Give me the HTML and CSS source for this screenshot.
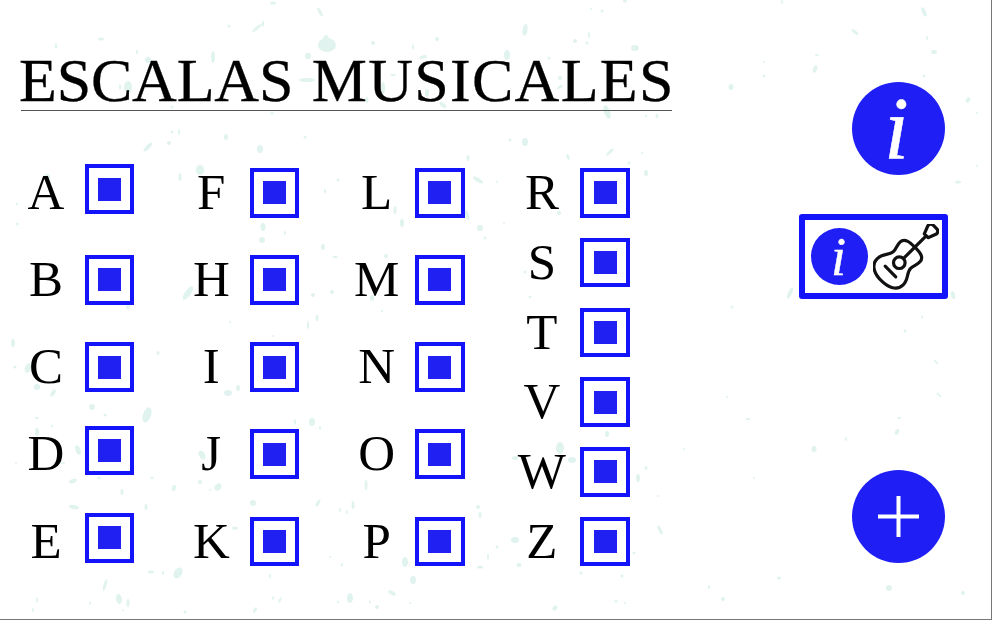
FILE: index.html
```html
<!DOCTYPE html>
<html lang="es">
<head>
<meta charset="utf-8">
<title>Escalas musicales</title>
<link rel="stylesheet" href="styles.css">
</head>
<body>
<div class="screen">
  <svg class="speckles" viewBox="0 0 992 620" aria-hidden="true">
    <g class="speck">
      <ellipse cx="56" cy="46" rx="1.2" ry="3"/><ellipse cx="101" cy="39" rx="3" ry="1.5"/><ellipse cx="137" cy="52" rx="1.2" ry="2"/><ellipse cx="213" cy="57" rx="2" ry="6"/><ellipse cx="148" cy="60" rx="3" ry="3"/><ellipse cx="128" cy="87" rx="4" ry="6"/><ellipse cx="120" cy="87" rx="1" ry="3"/><ellipse cx="257" cy="28" rx="6" ry="1.5" transform="rotate(-40 257 28)"/><ellipse cx="263" cy="24" rx="1.2" ry="3"/><ellipse cx="273" cy="3" rx="3" ry="1.5"/><ellipse cx="320" cy="12" rx="1.5" ry="5" transform="rotate(-30 320 12)"/><ellipse cx="327" cy="45" rx="9" ry="7"/><ellipse cx="326" cy="40" rx="3" ry="5"/><ellipse cx="308" cy="56" rx="3" ry="3"/><ellipse cx="307" cy="80" rx="8" ry="2"/><ellipse cx="229" cy="26" rx="1.5" ry="1.5"/><ellipse cx="373" cy="43" rx="2" ry="2"/><ellipse cx="437" cy="39" rx="2" ry="2"/><ellipse cx="413" cy="47" rx="1" ry="3"/><ellipse cx="423" cy="57" rx="4" ry="1.5" transform="rotate(-20 423 57)"/><ellipse cx="393" cy="75" rx="3" ry="1"/><ellipse cx="383" cy="88" rx="2" ry="6"/><ellipse cx="367" cy="100" rx="1.5" ry="3"/><ellipse cx="427" cy="93" rx="2" ry="4"/><ellipse cx="443" cy="105" rx="4" ry="2" transform="rotate(40 443 105)"/><ellipse cx="172" cy="107" rx="1.5" ry="1.5"/><ellipse cx="272" cy="113" rx="1.5" ry="1.5"/>
      <ellipse cx="148" cy="147" rx="6" ry="2" transform="rotate(-45 148 147)"/><ellipse cx="169" cy="143" rx="2" ry="2"/><ellipse cx="172" cy="132" rx="1.5" ry="1.5"/><ellipse cx="179" cy="132" rx="1" ry="3"/><ellipse cx="226" cy="137" rx="2" ry="3"/><ellipse cx="260" cy="149" rx="3" ry="4"/><ellipse cx="305" cy="137" rx="1.5" ry="1.5"/><ellipse cx="200" cy="170" rx="4" ry="5"/><ellipse cx="180" cy="177" rx="1.5" ry="4"/><ellipse cx="47" cy="177" rx="3" ry="3"/><ellipse cx="478" cy="180" rx="6" ry="2" transform="rotate(30 478 180)"/><ellipse cx="468" cy="158" rx="1.5" ry="3"/><ellipse cx="338" cy="180" rx="1.5" ry="1.5"/><ellipse cx="325" cy="191" rx="1" ry="2.5"/><ellipse cx="395" cy="210" rx="1.5" ry="4"/><ellipse cx="402" cy="223" rx="2" ry="4"/><ellipse cx="263" cy="227" rx="2.5" ry="4"/><ellipse cx="285" cy="233" rx="1" ry="2"/><ellipse cx="262" cy="240" rx="3" ry="3"/><ellipse cx="323" cy="247" rx="2" ry="3"/><ellipse cx="480" cy="228" rx="3" ry="3"/><ellipse cx="485" cy="238" rx="1.5" ry="1.5"/><ellipse cx="467" cy="215" rx="2" ry="5" transform="rotate(-20 467 215)"/><ellipse cx="17" cy="204" rx="1.2" ry="1.2"/><ellipse cx="17" cy="224" rx="1.5" ry="1.5"/><ellipse cx="188" cy="293" rx="3" ry="8" transform="rotate(35 188 293)"/><ellipse cx="335" cy="257" rx="3" ry="1"/><ellipse cx="386" cy="256" rx="2" ry="2"/><ellipse cx="332" cy="292" rx="2" ry="2"/><ellipse cx="313" cy="295" rx="2" ry="2"/><ellipse cx="372" cy="298" rx="2" ry="3"/><ellipse cx="128" cy="307" rx="2" ry="2"/>
      <ellipse cx="525" cy="30" rx="2.5" ry="6" transform="rotate(10 525 30)"/><ellipse cx="507" cy="55" rx="3" ry="5"/><ellipse cx="589" cy="35" rx="1" ry="3"/><ellipse cx="587" cy="43" rx="1.5" ry="1.5"/><ellipse cx="575" cy="41" rx="2" ry="2"/><ellipse cx="635" cy="48" rx="4" ry="3"/><ellipse cx="549" cy="58" rx="1.5" ry="1.5"/><ellipse cx="625" cy="1" rx="2" ry="1.5"/><ellipse cx="591" cy="9" rx="1" ry="1"/><ellipse cx="602" cy="11" rx="1.5" ry="1.5"/><ellipse cx="560" cy="78" rx="2" ry="2"/><ellipse cx="560" cy="87" rx="3" ry="1.5" transform="rotate(-30 560 87)"/><ellipse cx="607" cy="112" rx="3" ry="7" transform="rotate(-20 607 112)"/><ellipse cx="657" cy="116" rx="1.5" ry="2"/><ellipse cx="646" cy="116" rx="1.2" ry="1.2"/><ellipse cx="525" cy="142" rx="3" ry="4"/><ellipse cx="510" cy="140" rx="1.5" ry="1.5"/><ellipse cx="568" cy="157" rx="1.5" ry="3" transform="rotate(-20 568 157)"/><ellipse cx="610" cy="152" rx="5" ry="1.5" transform="rotate(-45 610 152)"/><ellipse cx="646" cy="173" rx="2" ry="3"/><ellipse cx="642" cy="153" rx="1" ry="1"/><ellipse cx="629" cy="163" rx="1.5" ry="1.5"/><ellipse cx="497" cy="182" rx="1" ry="1"/><ellipse cx="559" cy="213" rx="2" ry="2"/><ellipse cx="504" cy="223" rx="1" ry="1"/><ellipse cx="530" cy="297" rx="1.5" ry="1.5"/><ellipse cx="525" cy="272" rx="1.5" ry="1.5"/>
      <ellipse cx="731" cy="87" rx="2.5" ry="3"/><ellipse cx="764" cy="76" rx="1.5" ry="1.5"/><ellipse cx="764" cy="62" rx="1" ry="1"/><ellipse cx="815" cy="69" rx="2" ry="4" transform="rotate(20 815 69)"/><ellipse cx="817" cy="55" rx="2" ry="1"/><ellipse cx="855" cy="32" rx="4" ry="1.5" transform="rotate(40 855 32)"/><ellipse cx="782" cy="2" rx="1" ry="2"/><ellipse cx="924" cy="12" rx="2" ry="5" transform="rotate(-25 924 12)"/><ellipse cx="934" cy="52" rx="3" ry="2"/><ellipse cx="927" cy="38" rx="1" ry="2"/><ellipse cx="968" cy="100" rx="2" ry="3" transform="rotate(30 968 100)"/><ellipse cx="958" cy="182" rx="3" ry="1.5"/><ellipse cx="977" cy="166" rx="1" ry="1"/><ellipse cx="977" cy="113" rx="1" ry="1"/><ellipse cx="924" cy="76" rx="1.5" ry="1.5"/><ellipse cx="790" cy="293" rx="2" ry="6" transform="rotate(25 790 293)"/><ellipse cx="953" cy="295" rx="2" ry="4" transform="rotate(-15 953 295)"/><ellipse cx="732" cy="307" rx="1.5" ry="1.5"/>
      <ellipse cx="13" cy="343" rx="2" ry="4"/><ellipse cx="15" cy="367" rx="1.5" ry="1.5"/><ellipse cx="28" cy="368" rx="3" ry="5" transform="rotate(20 28 368)"/><ellipse cx="37" cy="387" rx="3" ry="3"/><ellipse cx="53" cy="393" rx="2" ry="4" transform="rotate(30 53 393)"/><ellipse cx="158" cy="353" rx="1.5" ry="2"/><ellipse cx="92" cy="407" rx="3" ry="3"/><ellipse cx="105" cy="415" rx="1.5" ry="1.5"/><ellipse cx="147" cy="415" rx="4" ry="8" transform="rotate(20 147 415)"/><ellipse cx="37" cy="418" rx="2" ry="1"/><ellipse cx="37" cy="432" rx="2" ry="4"/><ellipse cx="52" cy="426" rx="1" ry="1.5"/><ellipse cx="78" cy="450" rx="2.5" ry="5" transform="rotate(-20 78 450)"/><ellipse cx="63" cy="463" rx="2" ry="1"/><ellipse cx="16" cy="463" rx="1" ry="1"/><ellipse cx="73" cy="481" rx="4" ry="2" transform="rotate(-20 73 481)"/><ellipse cx="122" cy="492" rx="1.5" ry="3"/><ellipse cx="99" cy="478" rx="1.5" ry="1.5"/><ellipse cx="152" cy="478" rx="2" ry="1"/><ellipse cx="174" cy="488" rx="2" ry="3" transform="rotate(15 174 488)"/><ellipse cx="200" cy="482" rx="2" ry="2"/><ellipse cx="218" cy="487" rx="3" ry="4" transform="rotate(40 218 487)"/><ellipse cx="210" cy="490" rx="1" ry="1"/><ellipse cx="202" cy="455" rx="3" ry="5" transform="rotate(-30 202 455)"/><ellipse cx="74" cy="507" rx="5" ry="2" transform="rotate(10 74 507)"/><ellipse cx="146" cy="507" rx="1.5" ry="3"/><ellipse cx="228" cy="393" rx="4" ry="3"/><ellipse cx="238" cy="388" rx="2" ry="3"/><ellipse cx="253" cy="503" rx="3" ry="3"/><ellipse cx="318" cy="503" rx="1.5" ry="4" transform="rotate(30 318 503)"/><ellipse cx="353" cy="505" rx="1.5" ry="4"/><ellipse cx="340" cy="510" rx="1" ry="2"/><ellipse cx="347" cy="512" rx="1" ry="2"/><ellipse cx="312" cy="422" rx="3" ry="4"/><ellipse cx="295" cy="422" rx="1" ry="3"/><ellipse cx="320" cy="428" rx="1" ry="2"/><ellipse cx="366" cy="485" rx="1.5" ry="5"/><ellipse cx="317" cy="318" rx="1.5" ry="3"/><ellipse cx="308" cy="325" rx="1" ry="4"/><ellipse cx="382" cy="311" rx="1.2" ry="1.2"/><ellipse cx="273" cy="336" rx="1" ry="1"/><ellipse cx="230" cy="322" rx="1" ry="1"/><ellipse cx="478" cy="507" rx="2" ry="2"/><ellipse cx="480" cy="515" rx="1.5" ry="3"/><ellipse cx="235" cy="528" rx="3" ry="1.5"/><ellipse cx="405" cy="562" rx="3" ry="5"/><ellipse cx="480" cy="567" rx="3" ry="1.5"/><ellipse cx="488" cy="557" rx="1" ry="3"/><ellipse cx="413" cy="580" rx="3" ry="4"/><ellipse cx="392" cy="593" rx="4" ry="2" transform="rotate(30 392 593)"/><ellipse cx="350" cy="598" rx="3" ry="5"/><ellipse cx="338" cy="602" rx="1.2" ry="1.2"/><ellipse cx="370" cy="602" rx="1.2" ry="1.2"/><ellipse cx="377" cy="607" rx="2" ry="2"/><ellipse cx="410" cy="603" rx="1" ry="1"/><ellipse cx="342" cy="565" rx="1" ry="2"/><ellipse cx="330" cy="557" rx="1" ry="1"/>
      <ellipse cx="178" cy="573" rx="4" ry="6" transform="rotate(30 178 573)"/><ellipse cx="151" cy="572" rx="3" ry="1.5"/><ellipse cx="163" cy="573" rx="1" ry="2"/><ellipse cx="175" cy="575" rx="1.2" ry="1.2"/><ellipse cx="105" cy="585" rx="1.5" ry="6" transform="rotate(15 105 585)"/><ellipse cx="119" cy="599" rx="3" ry="5" transform="rotate(-10 119 599)"/><ellipse cx="128" cy="603" rx="1.5" ry="4"/><ellipse cx="37" cy="600" rx="1" ry="3"/><ellipse cx="33" cy="610" rx="1" ry="2"/><ellipse cx="90" cy="603" rx="1" ry="1.5"/><ellipse cx="123" cy="610" rx="1" ry="1"/><ellipse cx="185" cy="612" rx="1.5" ry="1.5"/><ellipse cx="270" cy="576" rx="1" ry="2.5"/><ellipse cx="280" cy="600" rx="1" ry="3" transform="rotate(25 280 600)"/><ellipse cx="273" cy="598" rx="1" ry="2"/><ellipse cx="255" cy="610" rx="1.5" ry="3" transform="rotate(30 255 610)"/>
      <ellipse cx="560" cy="448" rx="4" ry="6"/><ellipse cx="572" cy="460" rx="4" ry="3"/><ellipse cx="515" cy="458" rx="3" ry="2"/><ellipse cx="607" cy="434" rx="2" ry="3"/><ellipse cx="646" cy="468" rx="1.5" ry="2"/><ellipse cx="638" cy="478" rx="2" ry="4"/><ellipse cx="658" cy="496" rx="1" ry="1"/><ellipse cx="660" cy="530" rx="1.5" ry="5" transform="rotate(-25 660 530)"/><ellipse cx="515" cy="540" rx="4" ry="3"/><ellipse cx="497" cy="547" rx="1.5" ry="1.5"/><ellipse cx="519" cy="565" rx="2.5" ry="2"/><ellipse cx="634" cy="553" rx="1.5" ry="1.5"/><ellipse cx="581" cy="573" rx="1.5" ry="1.5"/><ellipse cx="622" cy="576" rx="1.5" ry="1.5"/><ellipse cx="616" cy="601" rx="1.5" ry="1.5"/><ellipse cx="625" cy="603" rx="1" ry="1"/><ellipse cx="555" cy="608" rx="2" ry="3" transform="rotate(35 555 608)"/><ellipse cx="709" cy="587" rx="1" ry="2"/><ellipse cx="723" cy="599" rx="2" ry="2"/><ellipse cx="779" cy="578" rx="2" ry="1.5"/><ellipse cx="889" cy="588" rx="3" ry="3"/><ellipse cx="963" cy="593" rx="2" ry="2"/><ellipse cx="748" cy="419" rx="2.5" ry="1"/><ellipse cx="814" cy="449" rx="2.5" ry="3"/><ellipse cx="897" cy="432" rx="2" ry="3" transform="rotate(25 897 432)"/><ellipse cx="846" cy="439" rx="1" ry="2"/><ellipse cx="899" cy="418" rx="2" ry="1"/><ellipse cx="936" cy="362" rx="3" ry="1" transform="rotate(40 936 362)"/><ellipse cx="939" cy="395" rx="3" ry="1" transform="rotate(40 939 395)"/><ellipse cx="905" cy="331" rx="1.5" ry="1.5"/><ellipse cx="922" cy="317" rx="1" ry="1.5"/><ellipse cx="727" cy="397" rx="1" ry="1"/><ellipse cx="754" cy="478" rx="1" ry="1"/><ellipse cx="684" cy="449" rx="1" ry="1"/>
    </g>
  </svg>

  <main class="left">
    <h1 class="title"><span class="word-first">ESCALAS</span> <span class="word-second">MUSICALES</span></h1>
    <div class="columns">
      <div class="column">
        <div class="row"><span class="letter">A</span><span class="box box-up"><span class="dot"></span></span></div>
        <div class="row"><span class="letter">B</span><span class="box"><span class="dot"></span></span></div>
        <div class="row"><span class="letter">C</span><span class="box"><span class="dot"></span></span></div>
        <div class="row"><span class="letter">D</span><span class="box box-up"><span class="dot"></span></span></div>
        <div class="row"><span class="letter">E</span><span class="box box-up"><span class="dot"></span></span></div>
      </div>
      <div class="column">
        <div class="row"><span class="letter">F</span><span class="box"><span class="dot"></span></span></div>
        <div class="row"><span class="letter">H</span><span class="box"><span class="dot"></span></span></div>
        <div class="row"><span class="letter">I</span><span class="box"><span class="dot"></span></span></div>
        <div class="row"><span class="letter">J</span><span class="box"><span class="dot"></span></span></div>
        <div class="row"><span class="letter">K</span><span class="box"><span class="dot"></span></span></div>
      </div>
      <div class="column">
        <div class="row"><span class="letter">L</span><span class="box"><span class="dot"></span></span></div>
        <div class="row"><span class="letter">M</span><span class="box"><span class="dot"></span></span></div>
        <div class="row"><span class="letter">N</span><span class="box"><span class="dot"></span></span></div>
        <div class="row"><span class="letter">O</span><span class="box"><span class="dot"></span></span></div>
        <div class="row"><span class="letter">P</span><span class="box"><span class="dot"></span></span></div>
      </div>
      <div class="column column-tight">
        <div class="row"><span class="letter">R</span><span class="box"><span class="dot"></span></span></div>
        <div class="row"><span class="letter">S</span><span class="box"><span class="dot"></span></span></div>
        <div class="row"><span class="letter">T</span><span class="box"><span class="dot"></span></span></div>
        <div class="row"><span class="letter">V</span><span class="box"><span class="dot"></span></span></div>
        <div class="row"><span class="letter">W</span><span class="box"><span class="dot"></span></span></div>
        <div class="row"><span class="letter">Z</span><span class="box"><span class="dot"></span></span></div>
      </div>
    </div>
  </main>

  <aside class="right">
    <div class="round round-large"><span class="info info-large">i</span></div>
    <div class="card">
      <div class="round round-small"><span class="info info-small">i</span></div>
      <svg class="guitar" viewBox="0 0 66 66" aria-hidden="true">
        <g transform="translate(26.3 38.7) rotate(45)">
          <path d="M0,-22 C7,-22 14,-21.5 14,-15 C14,-10 12,-8 12,-4 C12,2 18.5,5 18.5,13 C18.5,21.5 10,25.5 0,25.5 C-10,25.5 -18.5,21.5 -18.5,13 C-18.5,5 -12,2 -12,-4 C-12,-8 -14,-10 -14,-15 C-14,-21.5 -7,-22 0,-22 Z"/>
          <circle cx="0" cy="0" r="5.8"/>
          <path d="M0,-6 L0,-38"/>
          <path d="M-7.5,12.5 L7.5,12.5"/>
          <path d="M-2.6,-38 L2.6,-38 L6,-46.5 Q6,-50.5 2.2,-50.5 L-2.2,-50.5 Q-6,-50.5 -6,-46.5 Z"/>
        </g>
      </svg>
    </div>
    <div class="round round-large round-add">
      <svg class="plus" viewBox="0 0 41 41" aria-hidden="true"><path d="M0,20.5 H41 M20.5,0 V41"/></svg>
    </div>
  </aside>
</div>
</body>
</html>
```
FILE: styles.css
```css
* { box-sizing: border-box; }
html, body { margin: 0; padding: 0; background: #fff; }
.screen {
  position: relative;
  width: 992px;
  height: 620px;
  display: flex;
  justify-content: space-between;
  overflow: hidden;
  border-right: 1px solid #777;
  border-bottom: 1px solid #777;
  background: #fff;
  font-family: "Liberation Serif", "Times New Roman", serif;
  color: #000;
}
.speckles { position: absolute; left: 0; top: 0; width: 992px; height: 620px; }
.speck { fill: #e0f3ee; }

.left { position: relative; display: flex; flex-direction: column; padding-top: 52px; padding-left: 13px; }
.title {
  margin: 0 0 57px 8px;
  width: 651px;
  padding-bottom: 2px;
  border-bottom: 1px solid #555;
  font-size: 62px;
  font-weight: 400;
  line-height: 56px;
  word-spacing: 3px;
  text-indent: -2px;
  white-space: nowrap;
  -webkit-text-stroke: 0.3px #000;
}
.word-first { letter-spacing: -0.2px; }
.word-second { letter-spacing: 1.3px; }
.columns { display: flex; gap: 44.3px; }
.column { width: 121px; display: flex; flex-direction: column; gap: 37.67px; }
.column-tight { gap: 20.25px; }
.row { display: flex; align-items: center; gap: 5.5px; height: 49.5px; }
.letter { width: 66px; text-align: center; font-size: 51px; line-height: 49.5px; }
.box {
  width: 49.5px;
  height: 49.5px;
  flex: none;
  display: flex;
  align-items: center;
  justify-content: center;
  border: 4.4px solid #1414fb;
}
.box-up { align-self: flex-start; margin-top: -3.6px; }
.dot { width: 23px; height: 23px; background: #2020f2; }

.right { position: relative; display: flex; flex-direction: column; align-items: flex-end; padding: 82px 43px 56px 0; }
.round { display: flex; align-items: center; justify-content: center; border-radius: 50%; background: #1f1ff5; color: #fff; }
.round-large { width: 93px; height: 93px; margin-right: 3px; }
.round-small { width: 57px; height: 57px; flex: none; }
.round-add { margin-top: auto; }
.info { font-style: italic; line-height: 1; }
.info-large { font-size: 88px; margin-right: 4px; -webkit-text-stroke: 0.6px #fff; }
.info-small { font-size: 54px; margin-right: 2px; -webkit-text-stroke: 0.4px #fff; }
.card {
  width: 149px;
  height: 85px;
  margin-top: 39px;
  display: flex;
  align-items: center;
  gap: 5px;
  padding-left: 6px;
  border: 6.5px solid #1414fb;
  border-radius: 3px;
  background: #fff;
}
.guitar { width: 66px; height: 66px; flex: none; fill: none; stroke: #111; stroke-width: 3.2; stroke-linecap: round; stroke-linejoin: round; }
.plus { width: 41px; height: 41px; fill: none; stroke: #fff; stroke-width: 4; }
```
